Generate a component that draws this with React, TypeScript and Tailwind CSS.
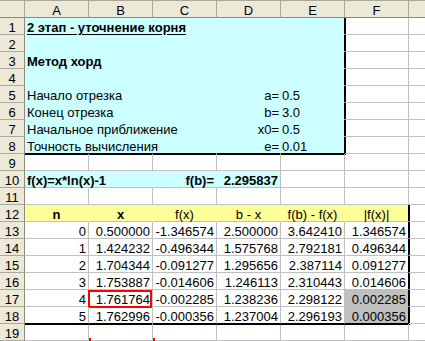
import React from 'react';

type CellProps = {
  children?: React.ReactNode;
  className?: string;
  r?: string;
  b?: string;
};

// worksheet cell: gridline on the right and bottom, text sits on the bottom like Excel
const Cell = ({ children, className = '', r = 'border-r-[#c0c0c0]', b = 'border-b-[#c0c0c0]' }: CellProps) => (
  <div className={`flex items-end whitespace-nowrap border-r border-b px-[2px] leading-[12px] ${r} ${b} ${className}`}>
    {children}
  </div>
);

const ColHead = ({ children }: { children?: React.ReactNode }) => (
  <div className="flex items-end justify-center border-t border-r border-b border-t-[#aca899] border-r-[#aca899] border-b-[#8c8a7d] bg-[#ece9d8] leading-[12px]">
    {children}
  </div>
);

const RowHead = ({ n }: { n: number }) => (
  <div className="flex items-end justify-center border-r border-b border-r-[#8c8a7d] border-b-[#aca899] bg-[#ece9d8] leading-[12px]">
    {n}
  </div>
);

const CY = 'bg-[#ccffff]';
const CYR = 'border-r-[#ccffff]';
const CYB = 'border-b-[#ccffff]';

const params = [
  { label: 'Начало отрезка', key: 'a=', value: '0.5' },
  { label: 'Конец отрезка', key: 'b=', value: '3.0' },
  { label: 'Начальное приближение', key: 'x0=', value: '0.5' },
  { label: 'Точность вычисления', key: 'e=', value: '0.01' },
];

const table = [
  ['0', '0.500000', '-1.346574', '2.500000', '3.642410', '1.346574'],
  ['1', '1.424232', '-0.496344', '1.575768', '2.792181', '0.496344'],
  ['2', '1.704344', '-0.091277', '1.295656', '2.387114', '0.091277'],
  ['3', '1.753887', '-0.014606', '1.246113', '2.310443', '0.014606'],
  ['4', '1.761764', '-0.002285', '1.238236', '2.298122', '0.002285'],
  ['5', '1.762996', '-0.000356', '1.237004', '2.296193', '0.000356'],
];

export default function App() {
  return (
    <div className="h-[341px] w-[425px] overflow-hidden bg-white font-['Liberation_Sans',Arial,sans-serif] text-[13px] text-black">
      <div className="grid grid-cols-[25px_repeat(7,64px)] grid-rows-[18px_repeat(19,17px)]">
        {/* column headers (G is mostly off screen, its letter is not visible) */}
        <ColHead />
        {['A', 'B', 'C', 'D', 'E', 'F'].map((c) => (
          <ColHead key={c}>{c}</ColHead>
        ))}
        <ColHead />

        {/* rows 1-4 */}
        <RowHead n={1} />
        <Cell className={`col-span-5 ${CY} shadow-[1px_0_0_#000]`} r="border-r-black" b={CYB}>
          <span className="font-bold underline underline-offset-2">2 этап - уточнение корня</span>
        </Cell>
        <Cell />
        <Cell />

        <RowHead n={2} />
        <Cell className={`col-span-5 ${CY} shadow-[1px_0_0_#000]`} r="border-r-black" b={CYB} />
        <Cell />
        <Cell />

        <RowHead n={3} />
        <Cell className={`col-span-5 ${CY} shadow-[1px_0_0_#000]`} r="border-r-black" b={CYB}>
          <span className="font-bold">Метод хорд</span>
        </Cell>
        <Cell />
        <Cell />

        <RowHead n={4} />
        <Cell className={`col-span-5 ${CY} shadow-[1px_0_0_#000]`} r="border-r-black" b={CYB} />
        <Cell />
        <Cell />

        {/* rows 5-8: parameters */}
        {params.map((p, i) => {
          const last = i === params.length - 1;
          return (
            <React.Fragment key={p.key}>
              <RowHead n={5 + i} />
              <Cell
                className={`col-span-3 ${CY} ${last ? 'shadow-[0_1px_0_#000]' : ''}`}
                r={CYR}
                b={last ? 'border-b-black' : CYB}
              >
                {p.label}
              </Cell>
              <Cell
                className={`justify-end pr-[1px] ${CY} ${last ? 'shadow-[0_1px_0_#000]' : ''}`}
                r={CYR}
                b={last ? 'border-b-black' : CYB}
              >
                {p.key}
              </Cell>
              <Cell
                className={`pl-[1px] ${CY} ${last ? 'shadow-[1px_0_0_#000,0_1px_0_#000,1px_1px_0_#000]' : 'shadow-[1px_0_0_#000]'}`}
                r="border-r-black"
                b={last ? 'border-b-black' : CYB}
              >
                {p.value}
              </Cell>
              <Cell />
              <Cell />
            </React.Fragment>
          );
        })}

        {/* row 9 */}
        <RowHead n={9} />
        {Array.from({ length: 7 }).map((_, i) => (
          <Cell key={i} />
        ))}

        {/* row 10: function */}
        <RowHead n={10} />
        <Cell className={`col-span-2 font-bold ${CY}`} r={CYR}>
          f(x)=x*ln(x)-1
        </Cell>
        <Cell className={`justify-end font-bold ${CY}`} r={CYR}>
          f(b)=
        </Cell>
        <Cell className={`justify-end font-bold ${CY}`}>2.295837</Cell>
        <Cell />
        <Cell />
        <Cell />

        {/* row 11 */}
        <RowHead n={11} />
        {Array.from({ length: 7 }).map((_, i) => (
          <Cell key={i} />
        ))}

        {/* row 12: table header */}
        <RowHead n={12} />
        <Cell className="justify-center bg-[#ffff99] font-bold" r="border-r-[#ffff99]">n</Cell>
        <Cell className="justify-center bg-[#ffff99] font-bold" r="border-r-[#ffff99]">x</Cell>
        <Cell className="justify-center bg-[#ffff99]" r="border-r-[#ffff99]">f(x)</Cell>
        <Cell className="justify-center bg-[#ffff99]" r="border-r-[#ffff99]">b - x</Cell>
        <Cell className="justify-center bg-[#ffff99]" r="border-r-[#ffff99]">f(b) - f(x)</Cell>
        <Cell className="justify-center bg-[#ffff99] shadow-[1px_0_0_#000]" r="border-r-black">|f(x)|</Cell>
        <Cell />

        {/* rows 13-18: iterations */}
        {table.map((row, i) => {
          const last = i === table.length - 1;
          const shaded = i >= 4;
          const b = last ? 'border-b-black' : 'border-b-[#c0c0c0]';
          const bs = last ? 'shadow-[0_1px_0_#000]' : '';
          return (
            <React.Fragment key={row[0]}>
              <RowHead n={13 + i} />
              {row.slice(0, 5).map((v, j) => (
                <Cell key={j} className={`relative justify-end ${bs}`} b={b}>
                  {v}
                  {i === 4 && j === 1 && (
                    <span className="absolute -left-px top-0 h-[18px] w-[64px] border-2 border-[#ff0000]" />
                  )}
                </Cell>
              ))}
              <Cell
                className={`justify-end ${shaded ? 'bg-[#c0c0c0]' : ''} ${
                  last ? 'shadow-[1px_0_0_#000,0_1px_0_#000,1px_1px_0_#000]' : 'shadow-[1px_0_0_#000]'
                }`}
                r="border-r-black"
                b={last ? 'border-b-black' : 'border-b-[#c0c0c0]'}
              >
                {row[5]}
              </Cell>
              <Cell />
            </React.Fragment>
          );
        })}

        {/* row 19 */}
        <RowHead n={19} />
        <Cell />
        <Cell className="relative">
          <span className="absolute -bottom-px left-0 h-[3px] w-[2px] bg-[#ff0000]" />
          <span className="absolute -bottom-px -right-[3px] h-[3px] w-[2px] bg-[#ff0000]" />
        </Cell>
        <Cell />
        <Cell />
        <Cell />
        <Cell />
        <Cell />
      </div>
    </div>
  );
}
